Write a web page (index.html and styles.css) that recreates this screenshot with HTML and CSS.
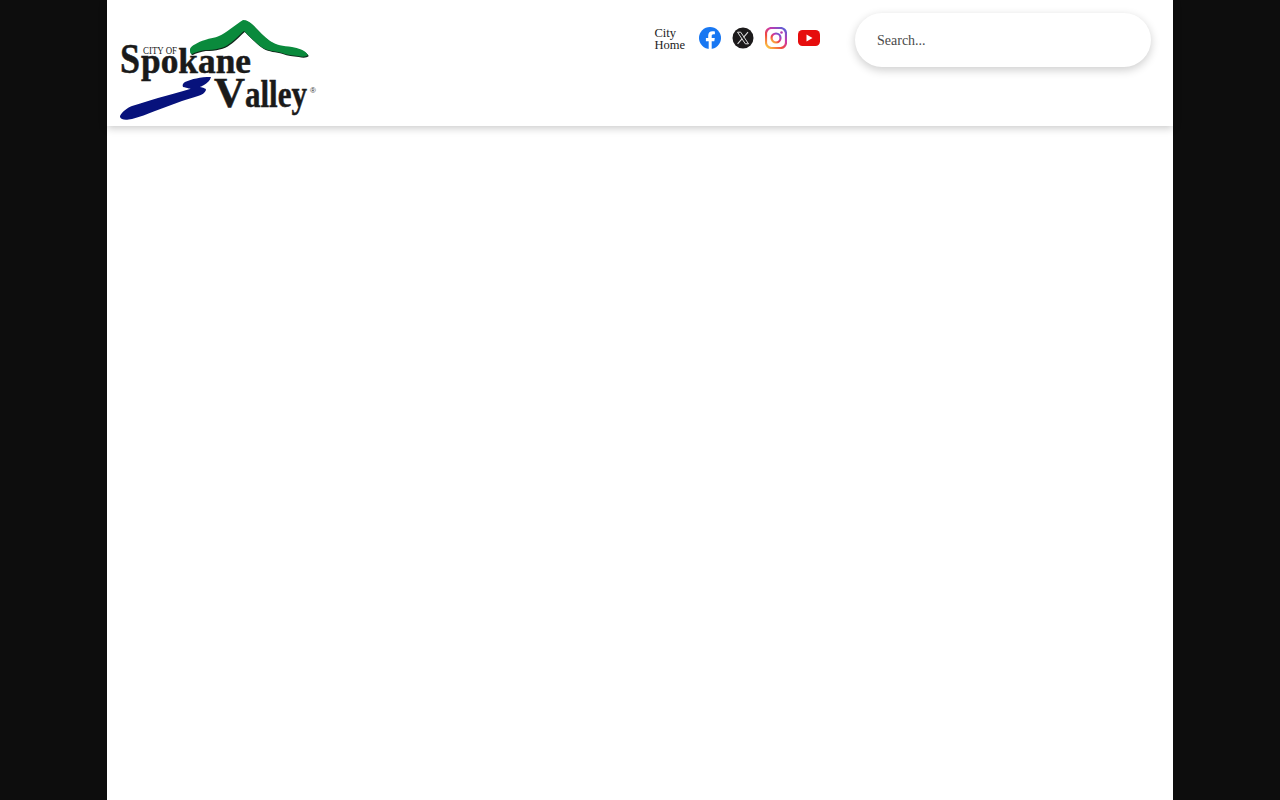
FILE: index.html
```html
<!DOCTYPE html>
<html lang="en">
<head>
	<meta charset="UTF-8">
	<title>City of Spokane Valley</title>
	<link rel="stylesheet" href="styles.css">
</head>
<body>
	<section class="wrap">
		<header class="top">
			<a href="#" class="logo">
				<svg width="197" height="102" viewBox="120 18 197 102">
					<path class="hill-shade" d="M190 49C191 46 198 42 205 40C210 38 215 38 219 36C226 33 235 25 243 20C247 20 250 22 253 25C258 30 263 36 270 41C276 45 283 46 292 47C298 48 305 50 308 55C306 57 302 57 298 56C292 55 287 55 282 53C275 51 268 51 263 48C258 45 250 37 244 31C240 34 235 40 229 44C224 48 215 50 205 50C200 51 195 52 192 54C190 54 190 52 190 49Z"/>
					<path class="hill" d="M190 49C191 46 198 42 205 40C210 38 215 38 219 36C226 33 235 25 243 20C247 20 250 22 253 25C258 30 263 36 270 41C276 45 283 46 292 47C298 48 305 50 308 55C306 57 302 57 298 56C292 55 287 55 282 53C275 51 268 51 263 48C258 45 250 37 244 31C240 34 235 40 229 44C224 48 215 50 205 50C200 51 195 52 192 54C190 54 190 52 190 49Z"/>
					<path class="river" d="M120 116C122 112 127 108 132 106C141 103 149 101 158 98C169 95 180 92 190 89C192 89 187 88 183 87C182 85 183 83 185 82C192 79 200 77 211 77C210 81 207 83 204 85C202 86 200 87 200 87C203 88 206 88 206 90C205 93 202 95 198 96C193 98 187 99 182 101C173 104 164 108 155 111C147 114 140 117 132 119C127 120 124 120 122 119C120 118 120 117 120 116Z"/>
					<text class="logo-sm" x="143" y="54" textLength="34" lengthAdjust="spacingAndGlyphs">CITY OF</text>
					<text class="logo-cap" x="120" y="73" textLength="20" lengthAdjust="spacingAndGlyphs">S</text>
					<text class="logo-lg" x="141" y="73" textLength="110" lengthAdjust="spacingAndGlyphs">pokane</text>
					<text class="logo-cap" x="214" y="107" textLength="31" lengthAdjust="spacingAndGlyphs">V</text>
					<text class="logo-v" x="245" y="107" textLength="62" lengthAdjust="spacingAndGlyphs">alley</text>
					<text class="logo-r" x="310" y="93">®</text>
				</svg>
			</a>
			<div class="tools">
				<a href="#" class="home">City<br>Home</a>
				<nav class="social">
					<a href="#">
						<svg width="22" height="22" viewBox="0 0 22 22">
							<circle cx="11" cy="11" r="11" fill="#1877f2"/>
							<path fill="#fff" d="M15.300 14.200l.5-3.200h-3.100V8.900c0-.9.4-1.700 1.800-1.700h1.400V4.500s-1.300-.2-2.500-.2c-2.500 0-4.200 1.500-4.200 4.300V11H6.900v3.200h2.800V22h3V14.200z"/>
						</svg>
					</a>
					<a href="#">
						<svg width="22" height="22" viewBox="0 0 22 22">
							<circle cx="11" cy="11" r="10.500" fill="#1c1a1b"/>
							<path fill="none" stroke="#ddd" stroke-width="1" d="M5.500 5.200h3.200l7.800 11.600h-3.200z"/>
							<path fill="none" stroke="#ddd" stroke-width="1.100" d="M16 5.200l-4.500 5.100M10.200 11.700L5.600 16.800"/>
						</svg>
					</a>
					<a href="#">
						<svg width="22" height="22" viewBox="0 0 22 22">
							<defs>
								<linearGradient id="ig" x1="0.1" y1="1" x2="0.9" y2="0">
									<stop offset="0" stop-color="#fdc441"/>
									<stop offset="0.35" stop-color="#f0493f"/>
									<stop offset="0.65" stop-color="#c837ab"/>
									<stop offset="1" stop-color="#5b5fd6"/>
								</linearGradient>
							</defs>
							<rect x="1" y="1" width="20" height="20" rx="5.500" fill="none" stroke="url(#ig)" stroke-width="2.200"/>
							<circle cx="11" cy="11" r="4.500" fill="none" stroke="url(#ig)" stroke-width="2.200"/>
							<circle cx="16.500" cy="5.500" r="1.300" fill="#b83bb0"/>
						</svg>
					</a>
					<a href="#">
						<svg width="22" height="22" viewBox="0 0 22 22">
							<rect x="0" y="3" width="22" height="16" rx="4.500" fill="#e60d0d"/>
							<path fill="#fff" d="M8.500 7.500l6 3.500-6 3.500z"/>
						</svg>
					</a>
				</nav>
				<input class="search" type="text" placeholder="Search...">
			</div>
		</header>
	</section>
</body>
</html>
```

FILE: styles.css
```css
body{
	margin: 0;
	background: #0d0d0d;
	font-family: "Liberation Serif", serif;
}
html{
	overflow: hidden;
}
.wrap{
	width: 1066px;
	height: 800px;
	margin: 0 auto;
	background: #fff;
}
.top{
	height: 126px;
	display: flex;
	justify-content: space-between;
	align-items: flex-start;
	padding: 0 22px 0 13px;
	box-shadow: 0 2px 8px rgba(0,0,0,.22);
}
.logo{
	display: block;
	margin-top: 18px;
}
.logo svg{
	display: block;
}
.hill{
	fill: #0a8a3c;
}
.hill-shade{
	fill: #10261a;
	transform: translate(.8px,1px);
}
.river{
	fill: #07127c;
}
.logo-lg,
.logo-cap,
.logo-v{
	font-family: "Liberation Serif", serif;
	font-weight: bold;
	fill: #1a1a1a;
	stroke: #1a1a1a;
	stroke-width: .5px;
}
.logo-lg{
	font-size: 36px;
}
.logo-cap{
	font-size: 42px;
}
.logo-v{
	font-size: 38px;
}
.logo-sm{
	font-family: "Liberation Serif", serif;
	font-size: 10.500px;
	fill: #1a1a1a;
}
.logo-r{
	font-family: "Liberation Sans", sans-serif;
	font-size: 8px;
	fill: #333;
}
.tools{
	display: flex;
	align-items: flex-start;
}
.home{
	margin-top: 27px;
	color: #222;
	font-size: 12.500px;
	line-height: 12px;
	text-decoration: none;
}
.social{
	display: flex;
	gap: 11px;
	margin: 27px 35px 0 14px;
}
.social a{
	display: block;
	height: 22px;
}
.social svg{
	display: block;
}
.search{
	width: 296px;
	height: 54px;
	margin-top: 13px;
	padding: 1px 22px 0;
	box-sizing: border-box;
	border: 0;
	border-radius: 27px;
	outline: 0;
	background: #fff;
	font-family: "Liberation Serif", serif;
	font-size: 14px;
	box-shadow: 0 3px 10px rgba(0,0,0,.2);
}
.search::placeholder{
	color: #4a4a4a;
}
```
